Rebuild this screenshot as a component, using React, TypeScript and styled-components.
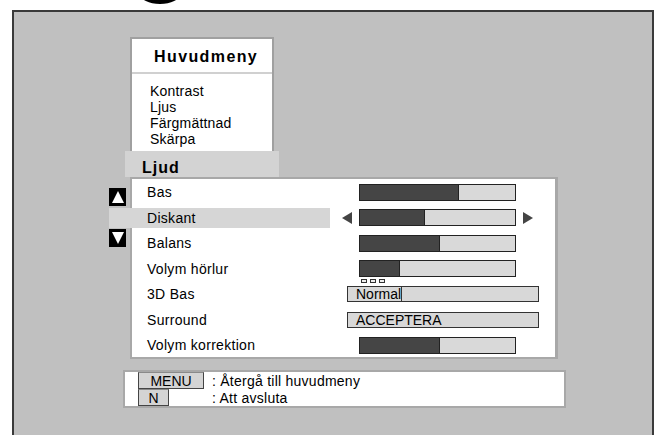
import styled, { createGlobalStyle } from "styled-components";

type Item =
    | { label: string; kind: "bar"; value: number; active?: boolean }
    | { label: string; kind: "box"; text: string; cursor?: boolean; markers?: boolean };

const items: Item[] = [
    { label: "Bas", kind: "bar", value: 63 },
    { label: "Diskant", kind: "bar", value: 41, active: true },
    { label: "Balans", kind: "bar", value: 51 },
    { label: "Volym hörlur", kind: "bar", value: 25 },
    { label: "3D Bas", kind: "box", text: "Normal", cursor: true, markers: true },
    { label: "Surround", kind: "box", text: "ACCEPTERA" },
    { label: "Volym korrektion", kind: "bar", value: 51 },
];

const mainMenu = ["Kontrast", "Ljus", "Färgmättnad", "Skärpa"];

const GlobalStyle = createGlobalStyle`
    html, body {
        margin: 0;
        padding: 0;
        background: #fff;
    }
    body {
        font-family: "Liberation Sans", Arial, sans-serif;
        color: #000;
    }
`;

const Page = styled.div`
    width: 660px;
    height: 435px;
    display: flex;
    flex-direction: column;
    overflow: hidden;
`;

const TopStrip = styled.div`
    height: 10px;
    padding-left: 140px;
    display: flex;
`;

const Screen = styled.div`
    flex: 1;
    margin-left: 12px;
    width: 642px;
    box-sizing: border-box;
    background: #c0c0c0;
    border: 2px solid #3a3a3a;
    border-bottom: none;
    padding: 25px 0 0 95px;
    display: flex;
    flex-direction: column;
    align-items: flex-start;
`;

const Card = styled.div`
    margin-left: 21px;
    width: 144px;
    box-sizing: border-box;
    background: #fff;
    border: 2px solid #a0a0a0;
    border-bottom: none;
`;

const CardHeader = styled.div`
    height: 35px;
    box-sizing: border-box;
    padding: 3px 0 0 22px;
    display: flex;
    align-items: center;
    font-size: 16px;
    font-weight: bold;
    letter-spacing: 1.4px;
    border-bottom: 2px solid #d0d0d0;
`;

const CardList = styled.div`
    padding: 9px 0 4px 18px;
    font-size: 14px;
    line-height: 16px;
    letter-spacing: 0.2px;
`;

const Tab = styled.div`
    margin-left: 16px;
    width: 154px;
    height: 26px;
    box-sizing: border-box;
    background: #d3d3d3;
    padding: 8px 0 0 17px;
    display: flex;
    align-items: center;
    font-size: 16px;
    font-weight: bold;
    letter-spacing: 1px;
`;

const Section = styled.div`
    display: flex;
`;

const Gutter = styled.div`
    width: 21px;
    padding-top: 11px;
    display: flex;
    flex-direction: column;
    gap: 23px;
`;

const ScrollBox = styled.div`
    width: 17px;
    height: 18px;
    background: #000;
    display: flex;
    align-items: center;
    justify-content: center;
`;

const Panel = styled.div`
    width: 428px;
    box-sizing: border-box;
    background: #fff;
    border: 2px solid #a8a8a8;
    border-right-width: 3px;
    padding: 3px 0 2px;
    display: flex;
    flex-direction: column;
    gap: 5.5px;
`;

const Row = styled.div`
    height: 20px;
    display: flex;
    align-items: center;
    font-size: 14px;
    letter-spacing: 0.3px;
`;

const Label = styled.div<{ $active?: boolean }>`
    height: 100%;
    display: flex;
    align-items: center;
    box-sizing: border-box;
    width: ${p => (p.$active ? "221px" : "198px")};
    margin-left: ${p => (p.$active ? "-23px" : "0")};
    padding-left: ${p => (p.$active ? "38px" : "15px")};
    margin-right: 12px;
    background: ${p => (p.$active ? "#d6d6d6" : "transparent")};
`;

const Slider = styled.div`
    display: flex;
    align-items: center;
`;

const ArrowSlot = styled.div<{ $side: "left" | "right" }>`
    width: 17px;
    display: flex;
    padding-left: ${p => (p.$side === "right" ? "7px" : "0")};
`;

const Bar = styled.div`
    width: 157px;
    height: 17px;
    box-sizing: border-box;
    border: 1px solid #222;
    background: #d9d9d9;
    display: flex;
`;

const BarFill = styled.div`
    height: 100%;
    background: #454545;
    border-right: 1px solid #222;
`;

const Box = styled.div`
    position: relative;
    margin-left: 5px;
    width: 192px;
    height: 16px;
    box-sizing: border-box;
    border: 1px solid #333;
    background: #d8d8d8;
    padding-left: 8px;
    font-size: 14px;
    line-height: 14px;
    letter-spacing: 0;
    display: flex;
`;

const BoxText = styled.span<{ $cursor?: boolean }>`
    height: 100%;
    border-right: ${p => (p.$cursor ? "1px solid #333" : "none")};
`;

const Markers = styled.div`
    position: absolute;
    top: -8px;
    left: 13px;
    display: flex;
    gap: 3px;
`;

const Marker = styled.div`
    width: 6px;
    height: 4px;
    box-sizing: border-box;
    border: 1px solid #333;
    background: #eee;
`;

const Footer = styled.div`
    margin: 11px 0 0 14px;
    width: 443px;
    box-sizing: border-box;
    background: #fff;
    border: 2px solid #a8a8a8;
    padding: 0 0 0 13px;
    display: grid;
    grid-template-columns: 66px auto;
    column-gap: 8px;
    font-size: 14px;
    letter-spacing: 0.25px;
`;

const Key = styled.div<{ $width: number }>`
    width: ${p => p.$width}px;
    height: 17px;
    box-sizing: border-box;
    background: #d4d4d4;
    border: 1px solid #444;
    border-top-color: #8a8a8a;
    display: flex;
    align-items: center;
    justify-content: center;
    letter-spacing: 0;
`;

const KeyText = styled.div`
    height: 17px;
    display: flex;
    align-items: center;
`;

function Triangle({ dir, color, size = 10 }: { dir: "up" | "down" | "left" | "right"; color: string; size?: number }) {
    const points = {
        up: "5,0 10,10 0,10",
        down: "0,0 10,0 5,10",
        left: "0,6 10,0 10,12",
        right: "0,0 10,6 0,12",
    }[dir];
    const vertical = dir === "up" || dir === "down";
    return (
        <svg
            width={size}
            height={vertical ? size : size * 1.2}
            viewBox={vertical ? "0 0 10 10" : "0 0 10 12"}
        >
            <polygon points={points} fill={color} />
        </svg>
    );
}

export default function App() {
    return (
        <Page>
            <GlobalStyle />
            <TopStrip>
                <svg width={40} height={10}>
                    <ellipse cx={20} cy={-6} rx={20} ry={10} fill="#000" />
                </svg>
            </TopStrip>
            <Screen>
                <Card>
                    <CardHeader>Huvudmeny</CardHeader>
                    <CardList>
                        {mainMenu.map(m => (
                            <div key={m}>{m}</div>
                        ))}
                    </CardList>
                </Card>
                <Tab>Ljud</Tab>
                <Section>
                    <Gutter>
                        <ScrollBox>
                            <Triangle dir="up" color="#fff" size={12} />
                        </ScrollBox>
                        <ScrollBox>
                            <Triangle dir="down" color="#fff" size={12} />
                        </ScrollBox>
                    </Gutter>
                    <Panel>
                        {items.map(item => (
                            <Row key={item.label}>
                                <Label $active={item.kind === "bar" && item.active}>{item.label}</Label>
                                {item.kind === "bar" ? (
                                    <Slider>
                                        <ArrowSlot $side="left">
                                            {item.active && <Triangle dir="left" color="#444" />}
                                        </ArrowSlot>
                                        <Bar>
                                            <BarFill style={{ width: `${item.value}%` }} />
                                        </Bar>
                                        <ArrowSlot $side="right">
                                            {item.active && <Triangle dir="right" color="#444" />}
                                        </ArrowSlot>
                                    </Slider>
                                ) : (
                                    <Box>
                                        {item.markers && (
                                            <Markers>
                                                <Marker />
                                                <Marker />
                                                <Marker />
                                            </Markers>
                                        )}
                                        <BoxText $cursor={item.cursor}>{item.text}</BoxText>
                                    </Box>
                                )}
                            </Row>
                        ))}
                    </Panel>
                </Section>
                <Footer>
                    <Key $width={66}>MENU</Key>
                    <KeyText>: Återgå till huvudmeny</KeyText>
                    <Key $width={31}>N</Key>
                    <KeyText>: Att avsluta</KeyText>
                </Footer>
            </Screen>
        </Page>
    );
}
